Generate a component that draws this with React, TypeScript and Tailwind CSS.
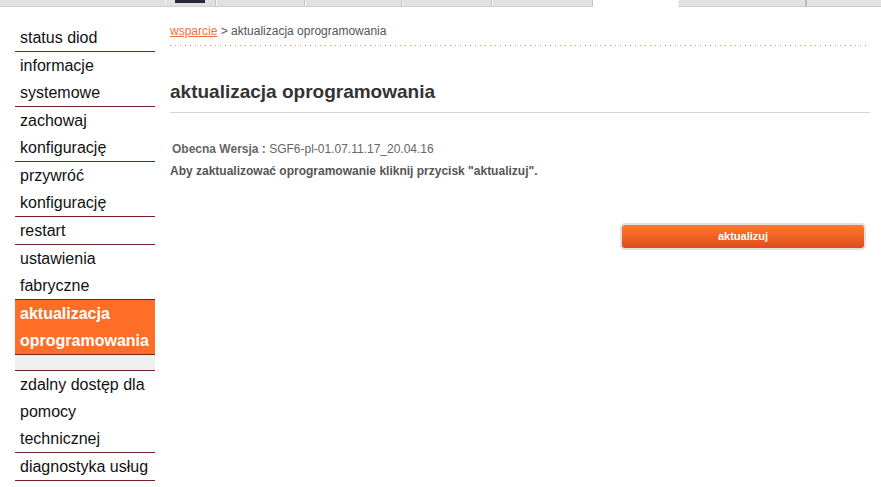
type MenuItem = {
  lines: string[];
  active?: boolean;
  spacer?: boolean;
};

const menu: MenuItem[] = [
  { lines: ["status diod"] },
  { lines: ["informacje", "systemowe"] },
  { lines: ["zachowaj", "konfigurację"] },
  { lines: ["przywróć", "konfigurację"] },
  { lines: ["restart"] },
  { lines: ["ustawienia", "fabryczne"] },
  { lines: ["aktualizacja", "oprogramowania"], active: true },
  { lines: [], spacer: true },
  { lines: ["zdalny dostęp dla", "pomocy", "technicznej"] },
  { lines: ["diagnostyka usług"] },
];

function TopBar() {
  const tab = "h-full border-l border-l-[#f4f4f4] border-r border-r-[#c4c4c4] bg-[#e1e1e1]";
  return (
    <div className="flex h-[7px] w-full">
      <div className="h-full w-[165px] border-b border-b-[#cfcfcf] bg-[#e1e1e1]" />
      <div className={`${tab} flex w-[51px] border-b border-b-[#cfcfcf] pl-[9px]`}>
        <div className="h-[3px] w-[30px] bg-[#28283a]" />
      </div>
      <div className={`${tab} w-[89px] border-b border-b-[#cfcfcf]`} />
      <div className={`${tab} w-[97px] border-b border-b-[#cfcfcf]`} />
      <div className={`${tab} w-[90px] border-b border-b-[#cfcfcf]`} />
      <div className={`${tab} w-[101px] border-b border-b-[#cfcfcf]`} />
      <div className="h-full w-[85px] bg-white" />
      <div className="h-full w-[129px] border-l border-l-[#f4f4f4] border-r-2 border-r-[#b8b8b8] border-b border-b-[#cfcfcf] bg-[#e1e1e1]" />
      <div className="h-full flex-1 border-b border-b-[#cfcfcf] bg-[#e4e4e4]" />
    </div>
  );
}

function Sidebar() {
  return (
    <ul className="ml-[15px] mt-[17px] w-[140px] shrink-0 text-[16px] leading-[27px] text-[#111]">
      {menu.map((item, i) => {
        if (item.spacer) {
          return <li key={i} className="h-[16px] border-b border-[#7b2020] bg-[#f0f0f0]" />;
        }
        return (
          <li
            key={i}
            className={
              item.active
                ? "border-b border-[#7b2020] bg-[#ff6e26] pl-[5px] font-bold text-white"
                : "border-b border-[#7b2020] pl-[5px]"
            }
          >
            {item.lines.map((line) => (
              <div key={line}>{line}</div>
            ))}
          </li>
        );
      })}
    </ul>
  );
}

export default function App() {
  return (
    <div className="h-[487px] w-[881px] overflow-hidden bg-white font-['Liberation_Sans',Arial,sans-serif]">
      <TopBar />
      <div className="flex">
        <Sidebar />
        <div className="ml-[15px] w-[700px]">
          <div className="pt-[17px] text-[12px] leading-[14px] text-[#555]">
            <a className="text-[#f4703c] underline">wsparcie</a> &gt; aktualizacja oprogramowania
          </div>
          <div className="mt-[7px] h-px w-[696px] bg-[repeating-linear-gradient(to_right,#f0844f_0,#f0844f_1px,transparent_1px,transparent_5px)]" />
          <h1 className="mt-[34px] text-[19px] font-bold leading-[24px] text-[#333]">
            aktualizacja oprogramowania
          </h1>
          <div className="mt-[8px] h-px w-full bg-[#d6d6d6]" />
          <div className="mt-[29px] pl-[2px] text-[12px] leading-[14px] text-[#666]">
            <span className="font-bold">Obecna Wersja : </span>
            SGF6-pl-01.07.11.17_20.04.16
          </div>
          <div className="mt-[8px] text-[12px] font-bold leading-[14px] text-[#555]">
            Aby zaktualizować oprogramowanie kliknij przycisk "aktualizuj".
          </div>
          <div className="ml-[450px] mt-[45px] w-[246px] rounded-[5px] border-2 border-[#e0e0e0] bg-white">
            <button className="flex h-[23px] w-full items-center justify-center rounded-[3px] bg-[linear-gradient(to_bottom,#ff7a2c,#e04b1c)] text-[11px] font-bold text-white">
              aktualizuj
            </button>
          </div>
        </div>
      </div>
    </div>
  );
}
